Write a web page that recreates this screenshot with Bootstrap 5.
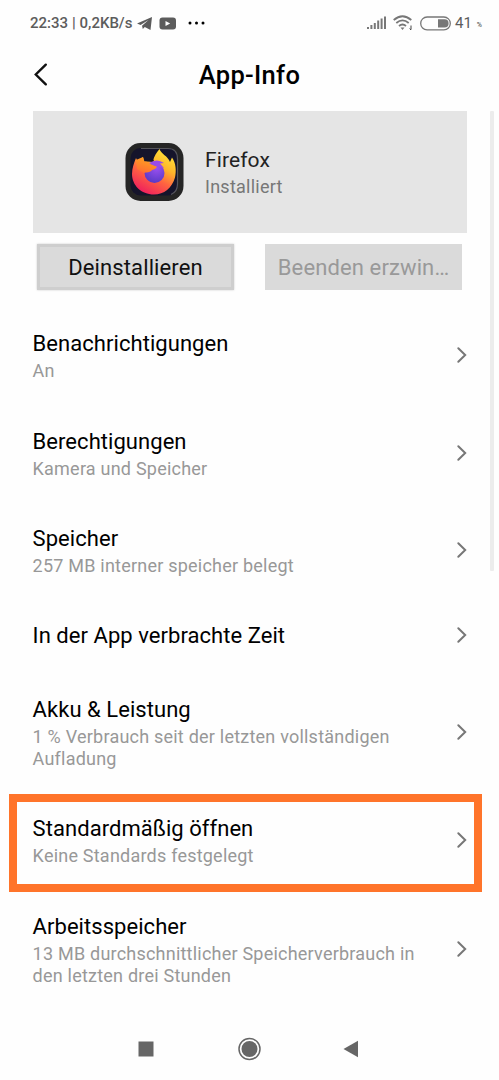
<!DOCTYPE html>
<html lang="de">
<head>
    <meta charset="UTF-8">
    <meta name="viewport" content="width=device-width, initial-scale=1.0">
    <title>App-Info</title>
    <link href="https://cdn.jsdelivr.net/npm/bootstrap@5.3.0/dist/css/bootstrap.min.css" rel="stylesheet">

    <style>
        body {
            font-family: Roboto, "Liberation Sans", sans-serif;
            background: #fefefe;
            color: #000;
            height: 1080px;
            overflow: hidden;
        }

        svg {
            display: block;
            flex: none;
        }

        /* Status bar */
        .status-bar {
            height: 46px;
            padding: 0 17px 0 30px;
            color: #5c5c5c;
            font-size: 15px;
            font-weight: 500;
            line-height: 18px;
        }

        .status-bar .percent {
            font-size: 7px;
            margin: 4px 0 0 5px;
        }

        .speed {
            font-size: 15px;
        }

        .dots {
            margin-left: 6px;
        }

        .wifi {
            margin-left: 7px;
        }

        .battery {
            margin-left: 7px;
        }

        /* Title bar */
        .title-bar {
            height: 65px;
            padding: 0 33px;
        }

        .title-bar h1 {
            font-size: 25.5px;
            font-weight: 500;
            line-height: 30px;
            letter-spacing: .3px;
            margin: -8px 0 0;
        }

        .title-bar svg {
            margin-top: -9px;
        }

        /* App card */
        .app-box {
            height: 122px;
            margin: 0 32px 0 32.500px;
            padding-left: 92.500px;
            background: #e5e5e5;
        }

        .app-label {
            margin-top: 2px;
        }

        .app-name {
            font-size: 21px;
            line-height: 27px;
            letter-spacing: .1px;
            color: #222;
        }

        .app-state {
            font-size: 18px;
            line-height: 26px;
            letter-spacing: .25px;
            color: #777;
        }

        /* Buttons */
        .action-row {
            height: 74px;
            padding: 11px 37px 0;
        }

        .action {
            width: 197px;
            height: 46px;
            padding: 0;
            border: 0;
            border-radius: 0;
            background: #dadada;
            color: #111;
            font-size: 22px;
            letter-spacing: .12px;
        }

        .action-main {
            border: 3px solid #cecece;
            box-shadow: 0 0 2px #ccc;
        }

        .action:disabled {
            background: #dadada;
            color: #999;
            opacity: 1;
        }

        /* Settings rows */
        .setting {
            padding: 22.2px 31px 22.2px 32.600px;
        }

        .setting svg {
            margin-top: -1px;
        }

        .setting-title {
            font-size: 22px;
            line-height: 29px;
            letter-spacing: .05px;
        }

        .setting-text {
            margin-top: 2px;
            font-size: 18px;
            line-height: 22px;
            letter-spacing: .22px;
            color: #989898;
        }

        .setting-single {
            height: 73.5px;
        }

        .marker {
            position: absolute;
            left: 9px;
            top: 2px;
            width: 473px;
            height: 98px;
            border: 8px solid #ff742a;
        }

        .scroll-thumb {
            position: absolute;
            left: 490px;
            top: 111px;
            width: 4px;
            height: 460px;
            border-radius: 1px;
            background: #ececec;
        }

        /* Navigation keys */
        .nav-keys {
            height: 72px;
            padding: 9px 140px 0 138px;
        }
    </style>
</head>
<body>

    <!-- Status bar -->
    <div class="status-bar d-flex align-items-center">
        <span>22:33</span>
        <span class="speed ms-1">| 0,2KB/s</span>
        <svg class="ms-1" width="17" height="15" viewBox="0 0 17 15">
            <path d="M1 7.500 16 1 14.500 14 8.800 11 6.800 13 6 9.700 12.500 4 4.600 8.900z" fill="#5c5c5c"/>
        </svg>
        <svg class="ms-1" width="24" height="15" viewBox="0 0 24 15">
            <rect x="2.500" y="1.500" width="16.500" height="12" rx="3" fill="#5c5c5c"/>
            <path d="M8.500 5v5l4.700-2.500z" fill="#fff"/>
        </svg>
        <svg class="dots" width="18" height="6" viewBox="0 0 18 6">
            <circle cx="3" cy="3" r="1.500"/><circle cx="9.500" cy="3" r="1.500"/><circle cx="16" cy="3" r="1.500"/>
        </svg>
        <svg class="ms-auto" width="20" height="14" viewBox="0 0 20 14">
            <path d="M2 13v-2M5.400 13v-4M8.800 13v-6M12.200 13v-8.500M15.600 13v-10.500M19 13v-12.500" stroke="#777" stroke-width="2"/>
        </svg>
        <svg class="wifi" width="20" height="16" viewBox="0 0 20 16" fill="none" stroke="#777" stroke-width="1.800">
            <path d="M.7 5Q9.500-2.500 18.300 5M3.300 8Q9.500 2.700 15.700 8M6 11Q9.500 8 13 11"/>
            <path d="M7.500 12.500h4L9.500 15z" fill="#777" stroke="none"/>
            <path d="M18 10.500v4M16.700 13.500 18 15" stroke="#444" stroke-width="1"/>
        </svg>
        <svg class="battery" width="31" height="15" viewBox="0 0 31 15">
            <rect x=".7" y="1" width="29.600" height="12.800" rx="6.400" fill="none" stroke="#777" stroke-width="1.300"/>
            <path d="M18 3.300h6.500a4.100 4.100 0 0 1 0 8.200H18z" fill="#777"/>
        </svg>
        <span class="ms-1 fw-normal">41</span>
        <span class="percent">%</span>
    </div>

    <!-- Title bar -->
    <header class="title-bar d-flex align-items-center">
        <svg width="16" height="23" viewBox="0 0 16 23" fill="none" stroke="#111" stroke-width="2.400" stroke-linecap="round">
            <path d="M12.800 1.700 2.800 11.500l10 9.800"/>
        </svg>
        <h1 class="flex-grow-1 text-center">App-Info</h1>
        <div class="pe-3"></div>
    </header>

    <!-- App -->
    <section class="app-box d-flex align-items-center">
        <svg width="60" height="60" viewBox="0 0 60 60">
            <defs>
                <linearGradient id="flame" x1=".8" y1="0" x2=".25" y2="1">
                    <stop offset="0" stop-color="#ffe83a"/>
                    <stop offset=".35" stop-color="#ffb52a"/>
                    <stop offset=".6" stop-color="#ff6540"/>
                    <stop offset="1" stop-color="#ee1a60"/>
                </linearGradient>
                <linearGradient id="head" x1=".6" y1="0" x2=".2" y2="1">
                    <stop offset="0" stop-color="#ffa51f"/>
                    <stop offset="1" stop-color="#ff6a33"/>
                </linearGradient>
                <radialGradient id="globe" cx=".6" cy=".25" r=".8">
                    <stop offset="0" stop-color="#9b50f0"/>
                    <stop offset="1" stop-color="#5638c4"/>
                </radialGradient>
            </defs>
            <rect x=".5" y="1" width="58" height="58" rx="15" fill="#252525"/>
            <rect x="5.500" y="6" width="47.500" height="47.500" rx="10" fill="#15142b"/>
            <path d="M16 6.500H43Q52.500 6.500 52.500 17V42Q52.500 50 46 52.500" fill="none" stroke="#55555b" stroke-width="1.200"/>
            <path d="M34.500 7C36 12 43 14 45 20L47 15.500C51 21 51.500 29 50 35.500 47 46 39 52.500 29 52.500 16 52.500 7 43 7 32 7 26 9 21 11 16L13 20 18 15 19 19.500 28 19C29 14 32 10 34.500 7z" fill="url(#flame)"/>
            <path d="M19 19Q24 16 29 18L28 20z" fill="#15142b"/>
            <circle cx="29.500" cy="31" r="10" fill="url(#globe)"/>
            <path d="M11 18 18 15 19.500 19.500Q24 19 25.500 22L32 24.500Q31 27 27 28C25 31 21 30 19 31L12 27z" fill="url(#head)"/>
            <path d="M24 21Q32 16 39 21L35 21.500 39 26 30 24z" fill="#994bea"/>
        </svg>
        <div class="app-label ms-3 ps-1">
            <div class="app-name">Firefox</div>
            <div class="app-state">Installiert</div>
        </div>
    </section>

    <div class="action-row d-flex justify-content-between">
        <button type="button" class="action action-main btn">Deinstallieren</button>
        <button type="button" class="action btn" disabled>Beenden erzwin…</button>
    </div>

    <!-- Settings -->
    <main>
        <div class="setting d-flex align-items-center justify-content-between">
            <div>
                <div class="setting-title">Benachrichtigungen</div>
                <div class="setting-text">An</div>
            </div>
            <svg width="12" height="18" viewBox="0 0 12 18"><use href="#chevron"/></svg>
        </div>
        <div class="setting d-flex align-items-center justify-content-between">
            <div>
                <div class="setting-title">Berechtigungen</div>
                <div class="setting-text">Kamera und Speicher</div>
            </div>
            <svg width="12" height="18" viewBox="0 0 12 18"><use href="#chevron"/></svg>
        </div>
        <div class="setting d-flex align-items-center justify-content-between">
            <div>
                <div class="setting-title">Speicher</div>
                <div class="setting-text">257 MB interner speicher belegt</div>
            </div>
            <svg width="12" height="18" viewBox="0 0 12 18"><use href="#chevron"/></svg>
        </div>
        <div class="setting setting-single d-flex align-items-center justify-content-between">
            <div class="setting-title">In der App verbrachte Zeit</div>
            <svg width="12" height="18" viewBox="0 0 12 18"><use href="#chevron"/></svg>
        </div>
        <div class="setting d-flex align-items-center justify-content-between">
            <div>
                <div class="setting-title">Akku &amp; Leistung</div>
                <div class="setting-text">1 % Verbrauch seit der letzten vollständigen<br>Aufladung</div>
            </div>
            <svg width="12" height="18" viewBox="0 0 12 18"><use href="#chevron"/></svg>
        </div>
        <div class="setting position-relative d-flex align-items-center justify-content-between">
            <div>
                <div class="setting-title">Standardmäßig öffnen</div>
                <div class="setting-text">Keine Standards festgelegt</div>
            </div>
            <svg width="12" height="18" viewBox="0 0 12 18"><use href="#chevron"/></svg>
            <div class="marker"></div>
        </div>
        <div class="setting d-flex align-items-center justify-content-between">
            <div>
                <div class="setting-title">Arbeitsspeicher</div>
                <div class="setting-text">13 MB durchschnittlicher Speicherverbrauch in<br>den letzten drei Stunden</div>
            </div>
            <svg width="12" height="18" viewBox="0 0 12 18">
                <path id="chevron" d="M2.300 2.300 9.200 9l-6.900 6.700" fill="none" stroke="#777" stroke-width="2" stroke-linecap="round"/>
            </svg>
        </div>
    </main>
    <div class="scroll-thumb"></div>

    <!-- Navigation keys -->
    <footer class="nav-keys d-flex align-items-center justify-content-between">
        <svg width="16" height="16" viewBox="0 0 16 16"><path d="M.5.5h15v15H.5z" fill="#666"/></svg>
        <svg width="24" height="24" viewBox="0 0 24 24">
            <circle cx="12.500" cy="12" r="10.500" fill="none" stroke="#666" stroke-width="1.500"/>
            <circle cx="12.500" cy="12" r="8" fill="#666"/>
        </svg>
        <svg width="16" height="18" viewBox="0 0 16 18"><path d="M.5 9 15 .8v16.400z" fill="#666"/></svg>
    </footer>

    <!-- Bootstrap JS -->
    <script src="https://cdn.jsdelivr.net/npm/bootstrap@5.3.0/dist/js/bootstrap.bundle.min.js"></script>

</body>
</html>
